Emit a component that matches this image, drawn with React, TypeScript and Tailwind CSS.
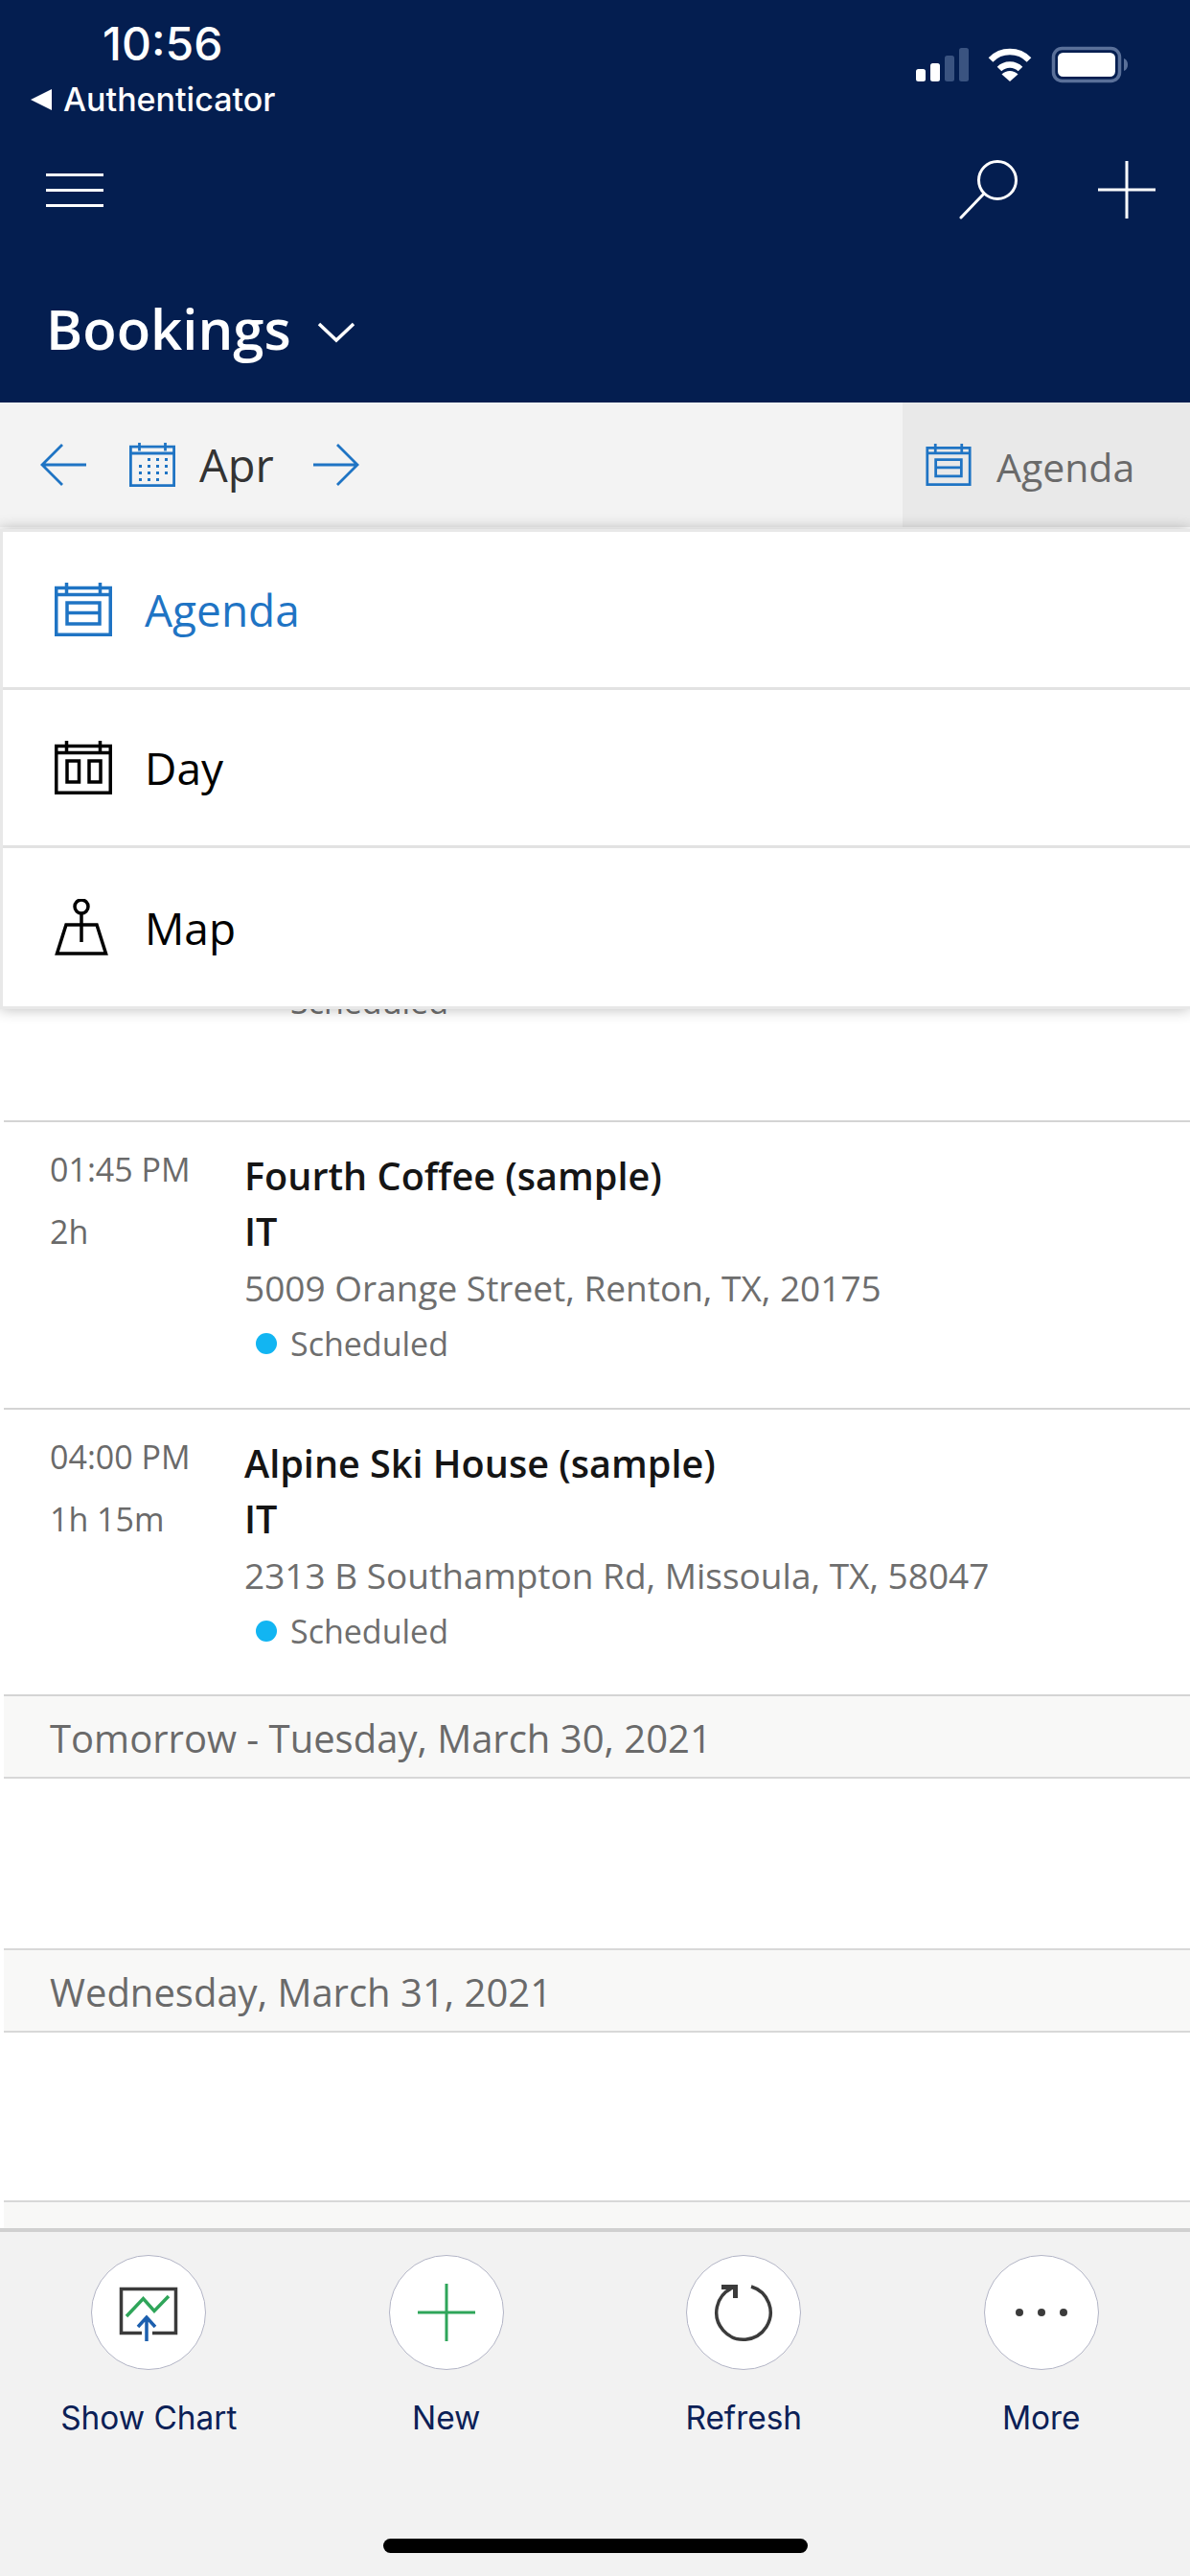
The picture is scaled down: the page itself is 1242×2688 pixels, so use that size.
const FONT = "font-['Open_Sans','Noto_Sans',sans-serif]";

function AgendaIcon({ className }: { className: string }) {
  return (
    <svg viewBox="0 0 60 56" className={className} fill="none" stroke="currentColor" strokeWidth="3.500">
      <path d="M1.750 5.500h56.500v48.750H1.750z" />
      <path d="M12.500 0v11M47.500 0v11M1.750 12.500h56.500" />
      <path d="M13 21h34v10.500H13zM13 31.500h34V43H13z" />
    </svg>
  );
}

function DayIcon({ className }: { className: string }) {
  return (
    <svg viewBox="0 0 60 56" className={className} fill="none" stroke="currentColor" strokeWidth="3.500">
      <path d="M1.750 5.500h56.500v48.750H1.750z" />
      <path d="M12.500 0v11M47.500 0v11M1.750 12.500h56.500" />
      <path d="M13 21h12.500v22H13zM36 21h12v22H36z" />
    </svg>
  );
}

function MapIcon({ className }: { className: string }) {
  return (
    <svg viewBox="0 0 56 59" className={className} fill="none" stroke="currentColor" strokeWidth="3.500">
      <circle cx="28" cy="8" r="7" />
      <path d="M28 15v30" />
      <path d="M28 27H12L2.500 57h51L44 27H28z" />
    </svg>
  );
}

function MonthIcon() {
  return (
    <svg viewBox="0 0 48 46" className="h-[46px] w-[48px] text-[#1f74c4]" fill="none" stroke="currentColor" strokeWidth="2.800">
      <path d="M1.400 4.200h45.200v40.400H1.400z" />
      <path d="M10.500 0v8.500M37.500 0v8.500M1.400 11h45.200" />
      <path
        d="M19 16h3v3h-3zM28 16h3v3h-3zM37 16h3v3h-3zM10 23h3v3h-3zM19 23h3v3h-3zM28 23h3v3h-3zM37 23h3v3h-3zM10 30h3v3h-3zM19 30h3v3h-3zM28 30h3v3h-3zM37 30h3v3h-3zM10 37h3v3h-3zM19 37h3v3h-3zM28 37h3v3h-3z"
        fill="currentColor"
        stroke="none"
      />
    </svg>
  );
}

function Arrow({ flip }: { flip?: boolean }) {
  return (
    <svg viewBox="0 0 48 44" className={flip ? 'h-[44px] w-[48px] text-[#1f74c4] -scale-x-100' : 'h-[44px] w-[48px] text-[#1f74c4]'} fill="none" stroke="currentColor" strokeWidth="2.800">
      <path d="M48 22H2M23 1 2 22l21 21" />
    </svg>
  );
}

function StatusIcons() {
  return (
    <svg viewBox="0 0 225 40" className="h-[40px] w-[225px]">
      <g fill="#fff">
        <rect x="1" y="24" width="10" height="13" rx="2.500" />
        <rect x="16" y="18" width="10" height="19" rx="2.500" />
      </g>
      <g fill="#3a5380">
        <rect x="31" y="10" width="10" height="27" rx="2.500" />
        <rect x="46" y="2" width="10" height="35" rx="2.500" />
      </g>
      <g fill="none" stroke="#fff" strokeWidth="6.500">
        <path d="M79 14.500a28 28 0 0 1 40 0" />
        <path d="M88 24a15.500 15.500 0 0 1 22 0" />
      </g>
      <path d="M99 37l-8.500-7.500a12 12 0 0 1 17 0z" fill="#fff" />
      <rect x="144.500" y="2.500" width="69" height="34" rx="9" fill="none" stroke="#5a7099" strokeWidth="3.500" />
      <rect x="149" y="7" width="60" height="25" rx="5.500" fill="#fff" />
      <path d="M218 13c3 1 4 4 4 6.500s-1 5.500-4 6.500z" fill="#5a7099" />
    </svg>
  );
}

function Appointment({ time, length, name, address, tall }: { time: string; length: string; name: string; address: string; tall?: boolean }) {
  return (
    <div className={`flex border-b-2 border-[#d4d4d4] pl-[48px] pt-[27px] ${tall ? 'h-[300px]' : 'h-[299px]'}`}>
      <div className="-mt-[10px] w-[203px] text-[34px] leading-[65px] text-[#6a6a6a]">
        <div>{time}</div>
        <div>{length}</div>
      </div>
      <div>
        <div className="text-[39.600px] font-semibold leading-[58px] text-[#151515]">{name}</div>
        <div className="text-[39.600px] font-semibold leading-[58px] text-[#151515]">IT</div>
        <div className="text-[37px] leading-[60px] text-[#6e6e6e]">{address}</div>
        <div className="flex h-[56px] items-center text-[34px] text-[#6e6e6e]">
          <span className="ml-[12px] mr-[14px] h-[22px] w-[22px] rounded-full bg-[#12b5f2]" />
          Scheduled
        </div>
      </div>
    </div>
  );
}

function DayHeader({ label }: { label: string }) {
  return (
    <div className="flex h-[86px] items-center border-b-2 border-[#d8d8d8] bg-[#f8f8f7] pl-[48px] pt-[4px] text-[40px] text-[#6a6a6a]">
      {label}
    </div>
  );
}

function FooterAction({ label, children }: { label: string; children: React.ReactNode }) {
  return (
    <div className="flex flex-col items-center">
      <div className="flex h-[120px] w-[120px] items-center justify-center rounded-full border border-[#b3b5c6] bg-white">
        {children}
      </div>
      <div className="mt-[28px] font-['Inter',sans-serif] text-[33.400px] leading-[44px] text-[#0b2056]">{label}</div>
    </div>
  );
}

export default function App() {
  return (
    <div className={`relative flex h-[2688px] w-[1242px] flex-col overflow-hidden bg-white ${FONT}`}>
      <header className="h-[420px] shrink-0 bg-[#041e50] text-white">
        <div className="flex justify-between">
          <div className="pl-[32px] pt-[17px]">
            <div className="ml-[75px] font-['Inter',sans-serif] text-[48px] font-medium leading-[58px]">10:56</div>
            <div className="mt-[7px] flex items-center font-['Inter',sans-serif] text-[34px] font-medium leading-[44px]">
              <span className="mr-[12px] h-0 w-0 border-y-[11px] border-r-[22px] border-y-transparent border-r-white" />
              Authenticator
            </div>
          </div>
          <div className="pr-[62px] pt-[48px]">
            <StatusIcons />
          </div>
        </div>
        <div className="mt-[41px] flex h-[62px] items-center justify-between pl-[48px] pr-[36px]">
          <div className="flex w-[60px] flex-col gap-[13px]">
            <span className="h-[3px] bg-white" />
            <span className="h-[3px] bg-white" />
            <span className="h-[3px] bg-white" />
          </div>
          <div className="flex items-center gap-[83px]">
            <svg viewBox="0 0 62 62" className="h-[62px] w-[62px]" fill="none" stroke="#fff" strokeWidth="3">
              <circle cx="40" cy="21" r="19.500" />
              <path d="M26 35 2 60" strokeLinecap="round" />
            </svg>
            <svg viewBox="0 0 60 60" className="h-[60px] w-[60px]" fill="none" stroke="#fff" strokeWidth="3">
              <path d="M30 0v60M0 30h60" />
            </svg>
          </div>
        </div>
        <div className="mt-[76px] flex items-center pl-[48px]">
          <span className="text-[58px] font-semibold leading-[76px]">Bookings</span>
          <svg viewBox="0 0 40 22" className="ml-[27px] mt-[8px] h-[22px] w-[40px]" fill="none" stroke="#fff" strokeWidth="3.500">
            <path d="m2 2 18 17L38 2" />
          </svg>
        </div>
      </header>

      <div className="flex h-[130px] shrink-0 items-stretch bg-[#f3f3f3]">
        <div className="flex flex-1 items-center pl-[42px]">
          <Arrow />
          <div className="ml-[45px]">
            <MonthIcon />
          </div>
          <span className="ml-[25px] text-[47px] text-[#333]">Apr</span>
          <div className="ml-[41px]">
            <Arrow flip />
          </div>
        </div>
        <div className="flex w-[300px] items-center bg-[#e9e9e9] pl-[24px] text-[#6a6a6a]">
          <AgendaIcon className="h-[44px] w-[48px] text-[#1f74c4]" />
          <span className="ml-[26px] mt-[5px] text-[41px]">Agenda</span>
        </div>
      </div>

      <main className="min-h-0 flex-1 pl-[4px]">
        <div className="flex h-[621px] flex-col justify-end border-b-2 border-[#d4d4d4] pb-[102px] pl-[299px] text-[34px] leading-[44px] text-[#6e6e6e]">
          Scheduled
        </div>
        <Appointment tall time="01:45 PM" length="2h" name="Fourth Coffee (sample)" address="5009 Orange Street, Renton, TX, 20175" />
        <Appointment time="04:00 PM" length="1h 15m" name="Alpine Ski House (sample)" address="2313 B Southampton Rd, Missoula, TX, 58047" />
        <DayHeader label="Tomorrow - Tuesday, March 30, 2021" />
        <div className="h-[179px] border-b-2 border-[#d8d8d8]" />
        <DayHeader label="Wednesday, March 31, 2021" />
        <div className="h-[177px] border-b-2 border-[#d8d8d8]" />
        <div className="h-[27px] bg-[#f8f8f7]" />
      </main>

      <footer className="relative h-[363px] shrink-0 border-t-4 border-[#d0d0d0] bg-[#f2f2f2] pt-[24px]">
        <div className="grid grid-cols-4">
          <FooterAction label="Show Chart">
            <svg viewBox="0 0 80 80" className="h-[80px] w-[80px]" fill="none">
              <path d="M33 61.500H11.500V15.500h57v46H44" stroke="#3b3b3b" strokeWidth="3.500" />
              <path d="M17 44l17.500-18.500L46 38.500 61 23" stroke="#2fa55a" strokeWidth="3.500" />
              <path d="M38 70V45M29 55l9-10 9 10" stroke="#1c5fae" strokeWidth="3.500" />
            </svg>
          </FooterAction>
          <FooterAction label="New">
            <svg viewBox="0 0 60 60" className="h-[60px] w-[60px]" fill="none" stroke="#2fa55a" strokeWidth="3">
              <path d="M30 0v60M0 30h60" />
            </svg>
          </FooterAction>
          <FooterAction label="Refresh">
            <svg viewBox="0 0 64 64" className="h-[64px] w-[64px]" fill="none" stroke="#3b3b3b">
              <path d="M40 5A28.200 28.200 0 1 1 20 6.500" strokeWidth="3.500" />
              <path d="M9 5.500h14.500V17" strokeWidth="5" />
            </svg>
          </FooterAction>
          <FooterAction label="More">
            <svg viewBox="0 0 56 10" className="h-[10px] w-[56px]" fill="#3b3b3b">
              <circle cx="5" cy="5" r="4" />
              <circle cx="28" cy="5" r="4" />
              <circle cx="51" cy="5" r="4" />
            </svg>
          </FooterAction>
        </div>
        <div className="absolute bottom-[24px] left-[400px] h-[15px] w-[443px] rounded-full bg-black" />
      </footer>

      {/* view switcher dropdown, sits over the list */}
      <div className="absolute left-0 right-0 top-[552px] border-y-[3px] border-l-[3px] border-[#e8e8e8] bg-white shadow-[0_0_14px_rgba(0,0,0,0.28)]">
        <MenuRow label="Agenda" active icon={<AgendaIcon className="h-[56px] w-[60px]" />} />
        <MenuRow label="Day" icon={<DayIcon className="h-[56px] w-[60px]" />} />
        <MenuRow label="Map" last icon={<MapIcon className="h-[59px] w-[56px]" />} />
      </div>
    </div>
  );
}

function MenuRow({ label, icon, active, last }: { label: string; icon: React.ReactNode; active?: boolean; last?: boolean }) {
  return (
    <div
      className={`flex items-center pl-[54px] text-[46px] ${active ? 'text-[#1f74c4]' : 'text-black'} ${last ? 'h-[165px]' : 'h-[165px] border-b-[3px] border-[#e2e2e2]'}`}
    >
      <div className="flex w-[94px]">{icon}</div>
      <span className="mt-[1px]">{label}</span>
    </div>
  );
}
